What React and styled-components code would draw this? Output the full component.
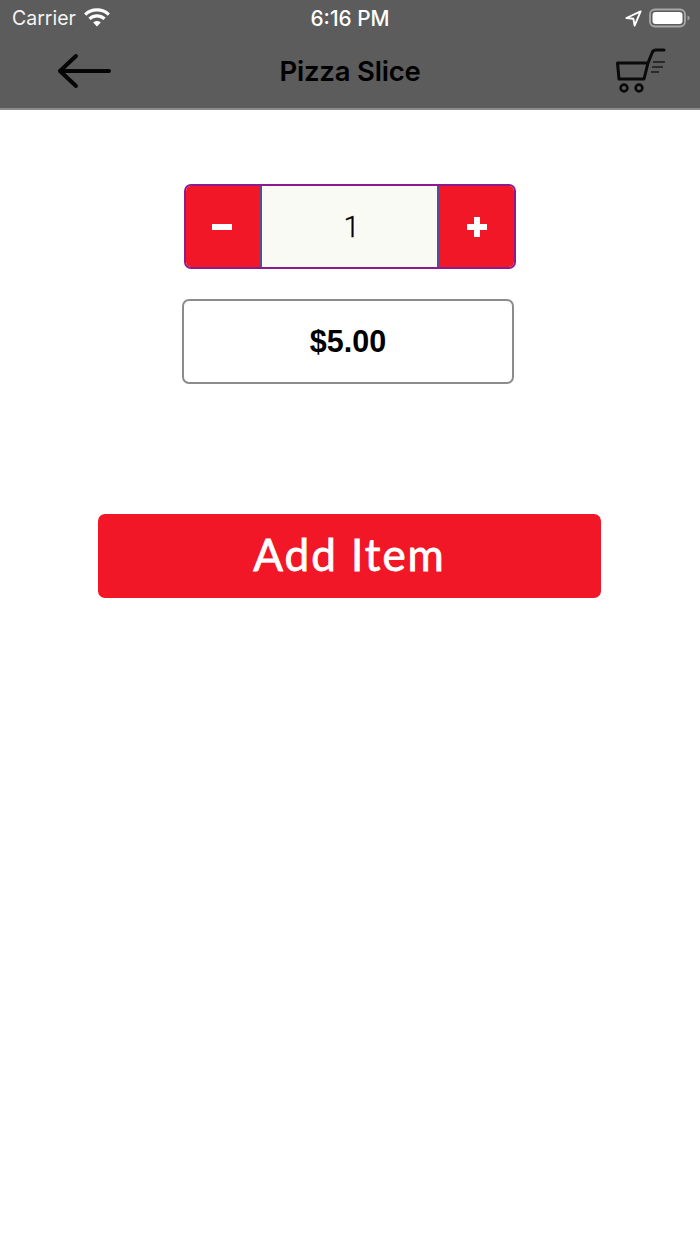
import styled, { createGlobalStyle } from 'styled-components'

const GlobalStyle = createGlobalStyle`
  html, body {
    margin: 0;
    padding: 0;
    background: #fff;
  }
`

const Page = styled.div`
  width: 700px;
  height: 1244px;
  background: #fff;
  font-family: "Liberation Sans", Arial, sans-serif;
  overflow: hidden;
`

const Header = styled.header`
  height: 108px;
  background: #5c5c5c;
  border-bottom: 2px solid #8c8c8c;
  display: flex;
  flex-direction: column;
`

const StatusBar = styled.div`
  height: 36px;
  display: grid;
  grid-template-columns: 1fr auto 1fr;
  align-items: center;
  color: #fff;
  font-size: 20px;
  padding: 0 9px;
`

const StatusLeft = styled.div`
  display: flex;
  align-items: center;
  gap: 8px;
  padding-left: 3px;
`

const StatusRight = styled.div`
  display: flex;
  align-items: center;
  justify-content: flex-end;
  gap: 7px;
`

const Clock = styled.span`
  font-weight: 500;
  font-family: "Inter", sans-serif;
  font-size: 20.8px;
`

const Carrier = styled.span`
  font-family: "Inter", sans-serif;
  font-size: 19.5px;
  font-weight: 400;
  color: #f4f4f4;
`

const NavBar = styled.nav`
  flex: 1;
  display: grid;
  grid-template-columns: 1fr auto 1fr;
  align-items: center;
  padding: 0 34px 2px;
`

const BackSlot = styled.div`
  display: flex;
  padding-left: 23px;
`

const Title = styled.h1`
  margin: 0;
  font-size: 27.5px;
  font-weight: 600;
  font-family: "Inter", sans-serif;
  letter-spacing: -0.2px;
  color: #000;
`

const CartSlot = styled.div`
  display: flex;
  justify-content: flex-end;
`

const Content = styled.main`
  display: flex;
  flex-direction: column;
  padding-top: 74px;
`

const Stepper = styled.div`
  width: 332px;
  height: 85px;
  margin-left: 184px;
  box-sizing: border-box;
  display: flex;
  border: 2px solid #8e1a8e;
  border-radius: 7px;
  overflow: hidden;
`

const StepButton = styled.button`
  width: ${(p) => p.$width}px;
  border: 0;
  padding: 0 ${(p) => p.$nudge || 0}px 0 0;
  background: #f11726;
  color: #fff;
  display: flex;
  align-items: center;
  justify-content: center;
`

const Quantity = styled.div`
  flex: 1;
  display: flex;
  align-items: center;
  justify-content: center;
  background: #fafaf5;
  border-left: 2px solid #4f4f9c;
  border-right: 2px solid #4f4f9c;
  font-family: "Roboto", sans-serif;
  font-size: 29px;
  font-weight: 300;
  -webkit-text-stroke: 0.35px #000;
  padding-left: 4px;
  color: #000;
`

const Price = styled.div`
  width: 332px;
  height: 85px;
  margin: 30px 0 0 182px;
  box-sizing: border-box;
  display: flex;
  align-items: center;
  justify-content: center;
  border: 2px solid #8c8c8c;
  border-radius: 7px;
  font-size: 30.5px;
  font-weight: 700;
  color: #000;
`

const AddButton = styled.button`
  width: 503px;
  height: 84px;
  margin: 130px 0 0 98px;
  border: 0;
  border-radius: 7px;
  padding: 0 0 4px;
  background: #f11726;
  color: #fff;
  font-family: "Lato", sans-serif;
  font-size: 44px;
  font-weight: 400;
  -webkit-text-stroke: 0.8px #fff;
  letter-spacing: 2px;
`

const WifiIcon = () => (
  <svg width="26" height="20" viewBox="0 0 26 20">
    <path d="M1.2 6.6C7.8 .4 18.2 .4 24.8 6.6" fill="none" stroke="#fff" strokeWidth="3.2" />
    <path d="M5.4 10.8C9.8 6.8 16.2 6.8 20.6 10.8" fill="none" stroke="#fff" strokeWidth="3.2" />
    <path d="M9.2 14.4 13 18.6 16.8 14.4C14.6 12.4 11.4 12.4 9.2 14.4Z" fill="#fff" />
  </svg>
)

const LocationIcon = () => (
  <svg width="17" height="17" viewBox="0 0 17 17">
    <path d="M15.6 1.4 1.4 8 8.4 8.8 9.6 15.6Z" fill="none" stroke="#fff" strokeWidth="1.9" strokeLinejoin="round" />
  </svg>
)

const BatteryIcon = () => (
  <svg width="42" height="20" viewBox="0 0 42 20">
    <rect x="1" y="1.5" width="35" height="17" rx="5" fill="none" stroke="#a8a8a8" strokeWidth="1.8" />
    <rect x="3.5" y="4" width="30" height="12" rx="3" fill="#fff" />
    <path d="M38.5 7.5C40 8 40.6 9 40.6 10S40 12 38.5 12.5Z" fill="#a0a0a0" />
  </svg>
)

const BackArrow = () => (
  <svg width="54" height="36" viewBox="0 0 54 36">
    <path d="M3 18H52M19 3 3 18 19 33" fill="none" stroke="#050505" strokeWidth="4" strokeLinecap="round" strokeLinejoin="round" />
  </svg>
)

const CartIcon = () => (
  <svg width="52" height="46" viewBox="0 0 52 46">
    <path d="M3.5 15H34M3.5 15 5 31H30L34 15 38 5C38.6 3 40 2 42 2H50" fill="none" stroke="#0a0a0a" strokeWidth="3" strokeLinecap="round" strokeLinejoin="round" />
    <path d="M39 14H51M38 19H49M37 24H45" fill="none" stroke="#2a2a2a" strokeWidth="2" />
    <circle cx="10" cy="40" r="3.4" fill="none" stroke="#0a0a0a" strokeWidth="2.6" />
    <circle cx="25" cy="40" r="3.4" fill="none" stroke="#0a0a0a" strokeWidth="2.6" />
  </svg>
)

const MinusIcon = () => (
  <svg width="20" height="8" viewBox="0 0 20 8">
    <rect y="1" width="20" height="6" fill="#fff" />
  </svg>
)

const PlusIcon = () => (
  <svg width="20" height="20" viewBox="0 0 20 20">
    <path d="M7 0h6v7h7v6h-7v7H7v-7H0V7h7Z" fill="#fff" />
  </svg>
)

function App() {
  return (
    <>
      <GlobalStyle />
      <Page>
        <Header>
          <StatusBar>
            <StatusLeft>
              <Carrier>Carrier</Carrier>
              <WifiIcon />
            </StatusLeft>
            <Clock>6:16 PM</Clock>
            <StatusRight>
              <LocationIcon />
              <BatteryIcon />
            </StatusRight>
          </StatusBar>
          <NavBar>
            <BackSlot>
              <BackArrow />
            </BackSlot>
            <Title>Pizza Slice</Title>
            <CartSlot>
              <CartIcon />
            </CartSlot>
          </NavBar>
        </Header>
        <Content>
          <Stepper>
            <StepButton $width={74} $nudge={2} aria-label="minus"><MinusIcon /></StepButton>
            <Quantity>1</Quantity>
            <StepButton $width={75} aria-label="plus"><PlusIcon /></StepButton>
          </Stepper>
          <Price>$5.00</Price>
          <AddButton>Add Item</AddButton>
        </Content>
      </Page>
    </>
  )
}

export default App
